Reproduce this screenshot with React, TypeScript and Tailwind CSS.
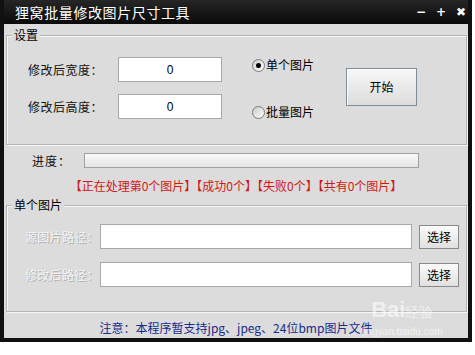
import React from "react";

const font = { fontFamily: '"Noto Sans CJK SC","Liberation Sans",sans-serif' };

function GroupBox({ title, className, children }: { title: string; className: string; children: React.ReactNode }) {
  return (
    <div className={`relative ml-[2px] w-[461px] border border-[#b4b4b4] shadow-[inset_1px_1px_0_#f6f6f6,1px_1px_0_#f6f6f6] ${className}`}>
      <span className="absolute left-[5px] top-[-9px] bg-[#dcdcdc] px-[2px] text-[12px] leading-[16px] text-black">{title}</span>
      {children}
    </div>
  );
}

function Radio({ checked, label }: { checked: boolean; label: string }) {
  return (
    <div className="flex h-[16px] items-center">
      <div className="flex h-[13px] w-[13px] items-center justify-center rounded-full border border-[#7a7a7a] bg-gradient-to-br from-[#cccccc] to-white">
        {checked && <div className="h-[5px] w-[5px] rounded-full bg-black" />}
      </div>
      <span className="ml-[1px] text-[12px] leading-[16px] text-black">{label}</span>
    </div>
  );
}

function Field({ label, value }: { label: string; value: string }) {
  return (
    <div className="flex items-center">
      <span className="w-[90px] text-[12px] tracking-[0.5px] text-[#111]">{label}</span>
      <div className="flex h-[25px] w-[104px] items-center justify-center border border-[#a8a8a8] bg-white text-[12px]" style={{ fontFamily: '"Liberation Sans",sans-serif' }}>{value}</div>
    </div>
  );
}

function PathRow({ label }: { label: string }) {
  return (
    <div className="flex items-center">
      <span className="w-[75px] text-[12px] tracking-[0.3px] text-[#f4f4f4] [text-shadow:1px_1px_0_#b0b0b0]">{label}</span>
      <div className="h-[25px] w-[312px] border border-[#a8a8a8] bg-white" />
      <div className="ml-[7px] flex h-[24px] w-[40px] items-center justify-center border border-[#8a8a8a] bg-gradient-to-b from-[#fbfbfb] to-[#e0e0e0] text-[12px] text-black">选择</div>
    </div>
  );
}

export default function App() {
  return (
    <div className="h-[355px] w-[475px] overflow-hidden bg-white" style={font}>
      <div className="flex h-[342px] w-[472px] flex-col bg-[#111111] px-[4px] pb-[4px]">
        {/* title bar */}
        <div className="flex h-[24px] shrink-0 items-center justify-between bg-gradient-to-b from-[#262626] to-[#0a0a0a] pl-[11px]">
          <span className="text-[14px] tracking-[0.6px] text-white">狸窝批量修改图片尺寸工具</span>
          <div className="flex items-center gap-[10px] pr-[2px] text-[12px] font-bold leading-none text-white" style={{ fontFamily: '"DejaVu Sans",sans-serif' }}>
            <span className="w-[10px] text-center">−</span>
            <span className="w-[10px] text-center">+</span>
            <span className="w-[10px] text-center">✖</span>
          </div>
        </div>
        {/* body */}
        <div className="relative flex flex-1 flex-col bg-[#dcdcdc]">
          <GroupBox title="设置" className="mt-[11px] h-[110px]">
            <div className="flex pl-[21px] pt-[21px]">
              <div className="flex flex-col gap-[12px]">
                <Field label="修改后宽度：" value="0" />
                <Field label="修改后高度：" value="0" />
              </div>
              <div className="ml-[30px] flex flex-col gap-[31px]">
                <Radio checked label="单个图片" />
                <Radio checked={false} label="批量图片" />
              </div>
              <div className="ml-[32px] mt-[11px] flex h-[38px] w-[71px] items-center justify-center border border-[#7e8e9a] bg-gradient-to-b from-[#f7f7f7] to-[#dcdcdc] text-[12px] text-black shadow-[inset_1px_1px_0_#ffffff]">开始</div>
            </div>
          </GroupBox>

          <div className="mt-[8px] flex h-[15px] items-center pl-[28px]">
            <span className="w-[52px] text-[12px] tracking-[1px] text-[#111]">进度：</span>
            <div className="h-[15px] w-[335px] border border-[#a0a0a0] bg-gradient-to-b from-[#fafafa] to-[#e4e4e4]" />
          </div>

          <div className="mt-[10px] text-center text-[12px] leading-[16px] text-[#d01818]">【正在处理第0个图片】【成功0个】【失败0个】【共有0个图片】</div>

          <GroupBox title="单个图片" className="mt-[11px] h-[107px]">
            <div className="flex flex-col gap-[13px] pl-[18px] pt-[18px]">
              <PathRow label="源图片路径：" />
              <PathRow label="修改后路径：" />
            </div>
          </GroupBox>

          <div className="mt-[8px] text-center text-[12px] leading-[16px] text-[#1a2a8a]">注意：本程序暂支持jpg、jpeg、24位bmp图片文件</div>

          <div className="pointer-events-none absolute left-[358px] top-[275px] flex flex-col items-center text-white/60" style={{ fontFamily: '"Liberation Sans",sans-serif' }}>
            <span className="text-[22px] font-bold leading-none">Bai<span className="text-[14px] font-normal">经验</span></span>
            <span className="mt-[6px] text-[10px] leading-none">jingyan.baidu.com</span>
          </div>
        </div>
      </div>
    </div>
  );
}
